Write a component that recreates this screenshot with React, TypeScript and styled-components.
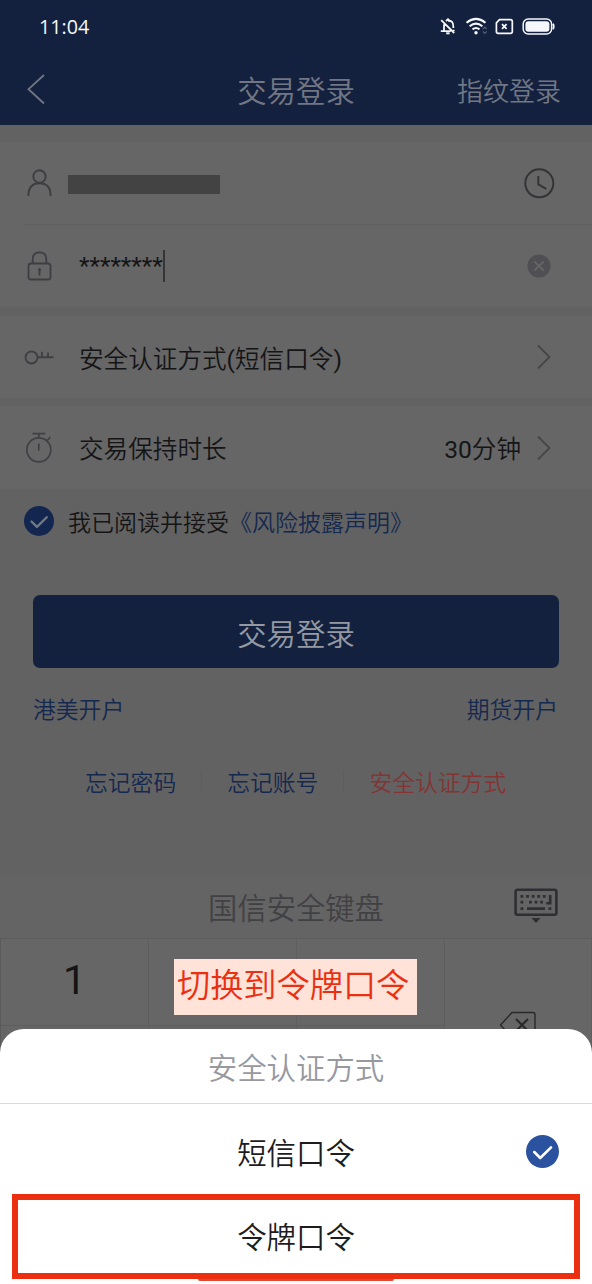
import React from "react";
import styled, { createGlobalStyle } from "styled-components";

const GlobalStyle = createGlobalStyle`
  * { box-sizing: border-box; }
  body {
    margin: 0;
    background: #626262;
    font-family: Roboto, "Noto Sans CJK SC", sans-serif;
    font-weight: 350;
  }
  svg { display: block; flex: none; }
`;

const Screen = styled.div`
  position: relative;
  width: 592px;
  height: 1284px;
  overflow: hidden;
  background: #626262;
  color: #151516;
`;

const Header = styled.header`
  height: 125px;
  background: #14213e;
`;

const StatusBar = styled.div`
  height: 54px;
  padding: 0 37px 2px 39px;
  display: flex;
  align-items: center;
  justify-content: space-between;
  color: #f5f7fb;
  font-family: "Open Sans", sans-serif;
  font-weight: 400;
  font-size: 19.7px;
`;

const StatusIcons = styled.div`
  display: flex;
  align-items: center;
  padding-top: 1px;
`;

const NavBar = styled.div`
  height: 71px;
  display: grid;
  grid-template-columns: 1fr auto 1fr;
  align-items: center;
  padding: 0 31px 0 27px;
  color: #717784;
`;

const NavTitle = styled.h1`
  margin: 4px 0 0 4px;
  font-size: 29.4px;
  font-weight: 350;
  line-height: 40px;
`;

const NavAction = styled.span`
  justify-self: end;
  margin-top: 4px;
  font-size: 26px;
  line-height: 38px;
`;

const Form = styled.main`
  padding-top: 17px;
  display: flex;
  flex-direction: column;
`;

const Row = styled.div<{ $height: number; $gap?: number }>`
  height: ${(p) => p.$height}px;
  margin-bottom: ${(p) => p.$gap ?? 0}px;
  padding: 0 37px 0 24px;
  display: flex;
  align-items: center;
  background: #666666;
  font-size: 24.6px;
`;

const Divider = styled.div`
  height: 1px;
  background: #616161;
  border-left: 24px solid #666666;
`;

const IconSlot = styled.span<{ $width?: number }>`
  width: ${(p) => p.$width ?? 55}px;
  flex: none;
`;

const Fill = styled.span`
  flex: 1;
`;

const RowLabel = styled.span<{ $lift?: number }>`
  flex: 1;
  padding-bottom: ${(p) => p.$lift ?? 0}px;
`;

const Latin = styled.span`
  font-weight: 400;
`;

const Redacted = styled.span`
  width: 152px;
  height: 19px;
  margin-top: 2px;
  background: #434343;
`;

const Password = styled.span`
  font-family: Roboto, sans-serif;
  font-size: 24.3px;
  font-weight: 400;
  line-height: 32px;
  height: 32px;
`;

const Caret = styled.span`
  width: 1.5px;
  height: 32px;
  margin-left: 0.5px;
  background: #353535;
`;

const RowValue = styled.span`
  margin-right: 14px;
  padding-bottom: 2px;
`;

const Agreement = styled.div`
  height: 64px;
  padding-left: 24px;
  display: flex;
  align-items: center;
  font-size: 23px;
`;

const AgreementText = styled.span`
  margin: 0 0 0 14px;
`;

const BlueText = styled.span`
  color: #15284f;
`;

const SubmitButton = styled.button`
  height: 73px;
  margin: 42px 33px 0;
  padding: 0;
  border: 0;
  border-radius: 7px;
  background: #14213e;
  color: #9599a2;
  font: inherit;
  font-size: 29.4px;
`;

const AccountLinks = styled.div`
  height: 82px;
  padding: 0 34px 2px 33px;
  display: flex;
  align-items: center;
  justify-content: space-between;
  color: #15284f;
  font-size: 22.8px;
`;

const HelpLinks = styled.div`
  height: 64px;
  padding: 0 0 2px 85px;
  display: flex;
  align-items: center;
  font-size: 22.8px;
  color: #15284f;
`;

const Separator = styled.i`
  width: 1px;
  height: 20px;
  margin: 0 25px;
  background: #5d5d5d;
`;

const Warning = styled.span`
  color: #843434;
`;

const Keyboard = styled.section`
  margin-top: 62px;
`;

const KeyboardHeader = styled.div`
  height: 62px;
  display: grid;
  grid-template-columns: 1fr auto 1fr;
  align-items: center;
  padding-right: 34px;
  background: #646464;
  color: #414144;
  font-size: 29.3px;
`;

const KeyboardTitle = styled.span`
  margin: -3px 0 0 34px;
`;

const KeyboardToggle = styled.span`
  justify-self: end;
  margin-top: -3px;
`;

const Keys = styled.div`
  display: grid;
  grid-template-columns: 148px 148px 148px 1fr;
  grid-template-rows: 87px 88px;
  border-left: 1px solid #5a5a5a;
`;

const Key = styled.div<{ $tall?: boolean }>`
  grid-row: ${(p) => (p.$tall ? "1 / 3" : "auto")};
  grid-column: ${(p) => (p.$tall ? "4" : "auto")};
  display: flex;
  align-items: center;
  justify-content: center;
  padding-bottom: ${(p) => (p.$tall ? 2 : 5)}px;
  border-top: 1px solid #5d5d5d;
  border-right: 1px solid #5e5e5e;
  background: #666666;
  font-size: 41px;
  font-weight: 400;
`;

const Sheet = styled.section`
  position: absolute;
  left: 0;
  right: 0;
  bottom: 0;
  height: 255px;
  border-radius: 24px 24px 0 0;
  background: #ffffff;
  color: #1d1d1f;
  font-size: 29.4px;
`;

const SheetTitle = styled.div`
  height: 75px;
  border-bottom: 1px solid #dadada;
  display: flex;
  align-items: center;
  justify-content: center;
  color: #98989f;
`;

const SheetOption = styled.div`
  height: 90px;
  padding: 5px 33px 0;
  display: grid;
  grid-template-columns: 1fr auto 1fr;
  align-items: center;
`;

const OptionName = styled.span`
  grid-column: 2;
  margin-top: -2px;
`;

const OptionMark = styled.span`
  justify-self: end;
`;

const HighlightedOption = styled.div`
  height: 85px;
  margin: 0 12px;
  padding-bottom: 4px;
  border: 6px solid #ec2f10;
  display: flex;
  align-items: center;
  justify-content: center;
`;

const HomeIndicator = styled.div`
  width: 196px;
  height: 2px;
  margin: 0 auto;
  border-radius: 0 0 3px 3px;
  background: #dd4a38;
`;

const Callout = styled.div`
  position: absolute;
  left: 174px;
  top: 959px;
  width: 243px;
  height: 56px;
  padding: 0 0 9px 3px;
  display: flex;
  align-items: center;
  background: #ffe2d8;
  color: #e93012;
  font-size: 33.2px;
  white-space: nowrap;
`;

const CheckMark = ({ size, fill, stroke }: { size: number; fill: string; stroke: string }) => (
  <svg width={size} height={size} viewBox="0 0 32 32" fill="none">
    <circle cx="16" cy="16" r="16" fill={fill} />
    <path d="M8 16.5l5.8 5.8L24.3 12" stroke={stroke} strokeWidth="2.5" strokeLinecap="round" strokeLinejoin="round" />
  </svg>
);

const Chevron = () => (
  <svg width="16" height="26" viewBox="0 0 16 26" fill="none" stroke="#464646" strokeWidth="1.8">
    <path d="M3 1.5L14.5 13 3 24.5" />
  </svg>
);

const StatusGlyphs = () => (
  <svg width="116" height="20" viewBox="439 17 116 20" fill="none" stroke="#f5f7fb" strokeWidth="1.7">
    <path d="M444 30.8v-4.5q0-2 1-3.4M448 20.8q5.3-.4 5.3 5.5v1.8M440.8 31.2h10M453.2 30l1 1.3M446 21l2-1.7 1.8 1.6M441.2 20.2l13 12.8" strokeWidth="1.8" />
    <path d="M446.2 33.3h3.4" strokeWidth="2" />
    <path d="M466.5 22.7q9.5-7.7 19 0M469.6 26.2q6.4-5.2 12.8 0M472.5 29.4q3.5-2.7 7 0" strokeWidth="2" />
    <circle cx="476" cy="32.8" r="1.7" fill="#f5f7fb" stroke="none" />
    <path d="M482.8 29.2l2-2 2 2M482.8 31.4l2 2 2-2" stroke="#56617a" strokeWidth="1.2" />
    <path d="M499.5 19.6h11q1.8 0 1.8 1.8v10.4q0 1.6-1.8 1.6h-12.3q-1.8 0-1.8-1.6v-9z" />
    <path d="M502 24.2l4.6 4.6M506.6 24.2l-4.6 4.6" strokeWidth="1.8" />
    <rect x="523.2" y="19.1" width="28.4" height="14.8" rx="5" strokeWidth="1.5" />
    <rect x="525.4" y="21.2" width="24" height="10.6" rx="3" fill="#f5f7fb" stroke="none" />
    <path d="M553 23.8q1.5 2.7 0 5.4" strokeWidth="1.8" />
  </svg>
);

const BackIcon = () => (
  <svg width="20" height="32" viewBox="0 0 20 32" fill="none" stroke="#717784" strokeWidth="1.8">
    <path d="M17 1L1.5 15.2 17 29.5" />
  </svg>
);

const UserIcon = () => (
  <svg width="30" height="28" viewBox="0 0 30 28" fill="none" stroke="#3e3e42" strokeWidth="1.9">
    <circle cx="15.5" cy="7.5" r="6.2" />
    <path d="M4.4 27q0-12.8 11.1-12.8T26.6 27" />
  </svg>
);

const LockIcon = () => (
  <svg width="30" height="32" viewBox="0 0 30 32" fill="none" stroke="#3e3e42" strokeWidth="1.8">
    <rect x="4.5" y="13.5" width="22" height="16" rx="2.5" />
    <path d="M8.7 13V9.5q0-7.2 6.8-7.2t6.8 7.2V13M15.5 19.5v6" />
    <circle cx="15.5" cy="19.5" r="1.5" fill="#3e3e42" stroke="none" />
  </svg>
);

const KeyIcon = () => (
  <svg width="32" height="18" viewBox="0 0 32 18" fill="none" stroke="#404044" strokeWidth="1.9">
    <circle cx="7.5" cy="9.5" r="6" />
    <path d="M13.5 9.3H29.5M18 9V3.8M24 9V4.5" />
  </svg>
);

const TimerIcon = () => (
  <svg width="30" height="32" viewBox="0 0 30 32" fill="none" stroke="#404044" strokeWidth="1.7">
    <circle cx="14.8" cy="17.8" r="12" />
    <path d="M8.5 1.6h12.8M14.8 2v4M14.8 11.5v7M22.8 9l3.5-3.8" />
  </svg>
);

const ClockIcon = () => (
  <svg width="32" height="32" viewBox="0 0 32 32" fill="none" stroke="#343437" strokeWidth="2">
    <circle cx="16.3" cy="16.3" r="14" />
    <path d="M15.3 9v8.3l8 4.5" />
  </svg>
);

const ClearIcon = () => (
  <svg width="24" height="24" viewBox="0 0 24 24" fill="none">
    <circle cx="12" cy="12" r="11.5" fill="#505054" />
    <path d="M7.3 7.3l9.4 9.4M16.7 7.3l-9.4 9.4" stroke="#666666" strokeWidth="1.7" />
  </svg>
);

const KeyboardIcon = () => (
  <svg width="44" height="36" viewBox="0 0 44 36" fill="none" stroke="#2f2f33">
    <rect x="1.6" y="1.8" width="40.8" height="25" rx="2" strokeWidth="2.6" />
    <path d="M6.5 8.4h27M6.5 14.2h3M15 14.2h15" strokeWidth="2.8" strokeDasharray="2.8 2.8" />
    <path d="M36.2 7v8.2h-4M6.5 20.6h2.8M13 20.6h18M34.5 20.6h2.8" strokeWidth="2.6" />
    <path d="M17.5 30h9L22 35z" fill="#2f2f33" stroke="none" />
  </svg>
);

const BackspaceIcon = () => (
  <svg width="38" height="28" viewBox="0 0 38 28" fill="none" stroke="#29292b" strokeWidth="1.4">
    <path d="M13 1.5h21q2 0 2 2v21q0 2-2 2H13L1.5 14z" />
    <path d="M17 8l12 12M29 8L17 20" strokeWidth="2" />
  </svg>
);

export default function App() {
  return (
    <>
      <GlobalStyle />
      <Screen>
        <Header>
          <StatusBar>
            <span>11:04</span>
            <StatusIcons>
              <StatusGlyphs />
            </StatusIcons>
          </StatusBar>
          <NavBar>
            <BackIcon />
            <NavTitle>交易登录</NavTitle>
            <NavAction>指纹登录</NavAction>
          </NavBar>
        </Header>
        <Form>
          <Row $height={82}>
            <IconSlot $width={43.5}><UserIcon /></IconSlot>
            <Redacted />
            <Fill />
            <ClockIcon />
          </Row>
          <Divider />
          <Row $height={82} $gap={9}>
            <IconSlot><LockIcon /></IconSlot>
            <Password>********</Password>
            <Caret />
            <Fill />
            <IconSlot $width={28}><ClearIcon /></IconSlot>
          </Row>
          <Row $height={82} $gap={8}>
            <IconSlot><KeyIcon /></IconSlot>
            <RowLabel>安全认证方式<Latin>(</Latin>短信口令<Latin>)</Latin></RowLabel>
            <IconSlot $width={20}><Chevron /></IconSlot>
          </Row>
          <Row $height={83}>
            <IconSlot><TimerIcon /></IconSlot>
            <RowLabel $lift={2}>交易保持时长</RowLabel>
            <RowValue><Latin>30</Latin>分钟</RowValue>
            <IconSlot $width={20}><Chevron /></IconSlot>
          </Row>
          <Agreement>
            <CheckMark size={30} fill="#13264f" stroke="#717986" />
            <AgreementText>
              我已阅读并接受<BlueText>《风险披露声明》</BlueText>
            </AgreementText>
          </Agreement>
          <SubmitButton>交易登录</SubmitButton>
          <AccountLinks>
            <span>港美开户</span>
            <span>期货开户</span>
          </AccountLinks>
          <HelpLinks>
            <span>忘记密码</span>
            <Separator />
            <span>忘记账号</span>
            <Separator />
            <Warning>安全认证方式</Warning>
          </HelpLinks>
        </Form>
        <Keyboard>
          <KeyboardHeader>
            <span />
            <KeyboardTitle>国信安全键盘</KeyboardTitle>
            <KeyboardToggle><KeyboardIcon /></KeyboardToggle>
          </KeyboardHeader>
          <Keys>
            <Key>1</Key>
            <Key />
            <Key />
            <Key $tall><BackspaceIcon /></Key>
            <Key />
            <Key />
            <Key />
          </Keys>
        </Keyboard>
        <Callout>切换到令牌口令</Callout>
        <Sheet>
          <SheetTitle>安全认证方式</SheetTitle>
          <SheetOption>
            <OptionName>短信口令</OptionName>
            <OptionMark><CheckMark size={33} fill="#2b529f" stroke="#ffffff" /></OptionMark>
          </SheetOption>
          <HighlightedOption>令牌口令</HighlightedOption>
          <HomeIndicator />
        </Sheet>
      </Screen>
    </>
  );
}
